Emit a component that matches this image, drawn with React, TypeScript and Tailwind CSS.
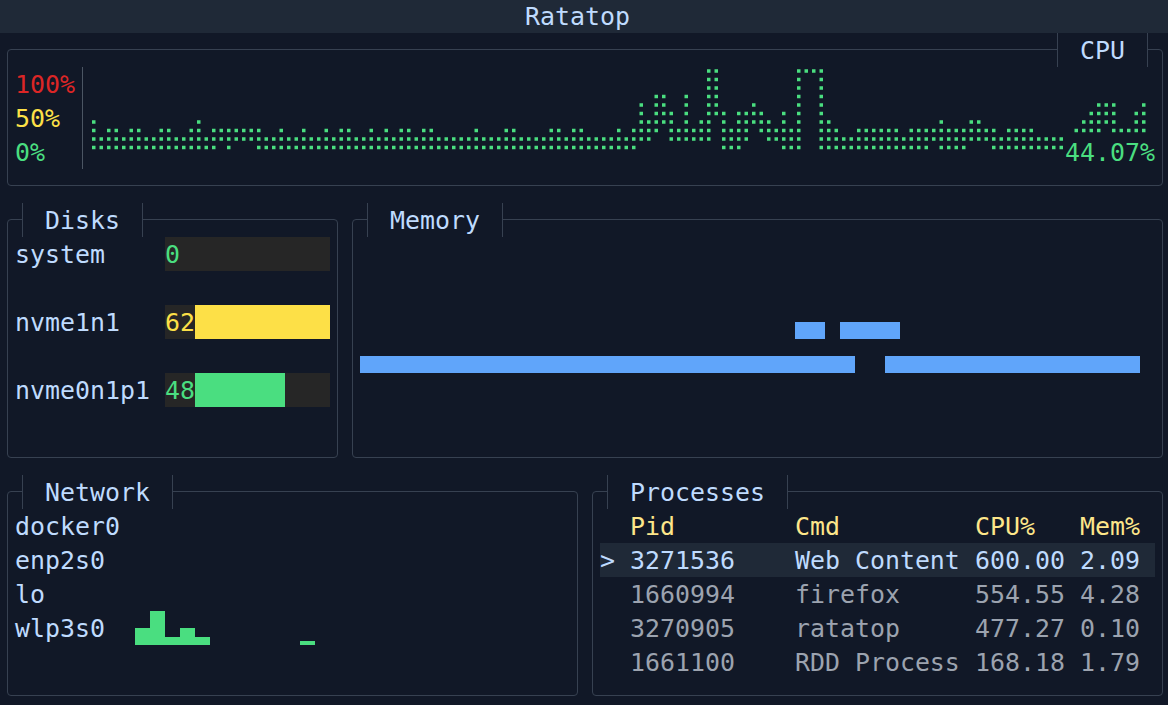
import type { ReactNode } from 'react';
import clsx from 'clsx';

// braille-style dot plot, one string per dot row (top to bottom), ranges of dot columns
const cpuDots: string[] = [
  '82-83,94-97',
  '82-83,94,97',
  '82-83,94,97',
  '75-76,79,82-83,94,97',
  '73,75-76,79,82-83,88,94,97,134-136,140',
  '73,75-77,79,82-84,86-89,92,94,97,133-136,139-140',
  '0,14,73-77,79,81-82,84,86-90,92,94,97-98,113,117-118,132-136,139-140',
  '0,2-3,5-6,9-10,13-14,16-22,25,28,31,33-34,37,39,41-42,44-45,51,55-56,61-62,64-65,70,72-75,77-82,84-87,89-94,97-99,102-107,109-120,122-125,131-134,136-140',
  '0-74,77-82,84-87,90-94,97-129',
  '0-16,18,22-72,84-86,92-94,97-111,113-116,120-129',
];

function parseRow(row: string): number[] {
  const out: number[] = [];
  row.split(',').forEach((part) => {
    const [a, b] = part.split('-').map(Number);
    for (let i = a; i <= (b ?? a); i++) out.push(i);
  });
  return out;
}

const disks = [
  { name: 'system', value: 0, fill: 0, color: 'text-[#4ade80]', bar: 'bg-[#4ade80]' },
  { name: 'nvme1n1', value: 62, fill: 135, color: 'text-[#fde047]', bar: 'bg-[#fde047]' },
  { name: 'nvme0n1p1', value: 48, fill: 90, color: 'text-[#4ade80]', bar: 'bg-[#4ade80]' },
];

const sparkline = [17, 34, 8.5, 17, 8.5, 0, 0, 0, 0, 0, 0, 4.25];

const processes = [
  { pid: '3271536', cmd: 'Web Content', cpu: '600.00', mem: '2.09' },
  { pid: '1660994', cmd: 'firefox', cpu: '554.55', mem: '4.28' },
  { pid: '3270905', cmd: 'ratatop', cpu: '477.27', mem: '0.10' },
  { pid: '1661100', cmd: 'RDD Process', cpu: '168.18', mem: '1.79' },
];

interface PanelProps {
  title: string;
  right?: boolean;
  className?: string;
  children?: ReactNode;
}

function Panel({ title, right, className, children }: PanelProps) {
  return (
    <div className={clsx('flex flex-col shrink-0', className)}>
      <div className="flex-1 min-h-0 flex flex-col mt-[16px] mb-[17px] mx-[7px] px-[7px] border border-[#374151] rounded-[4px]">
        <div className={clsx('-mt-[17px] h-[34px] flex shrink-0', right && 'justify-end')}>
          <div className="mx-[7px] h-[34px] px-[22px] border-x border-[#374151] bg-[#111827] text-[#bfdbfe] whitespace-pre">
            {title}
          </div>
        </div>
        {children}
      </div>
    </div>
  );
}

function CpuChart() {
  return (
    <div className="relative w-[1065px] h-[102px]">
      <svg width="1065" height="102" className="block">
        {cpuDots.map((row, j) =>
          parseRow(row).map((k) => (
            <rect key={`${j}-${k}`} x={2 + 7.5 * k} y={2.25 + 8.5 * j} width={3.5} height={3.5} fill="#4ade80" />
          ))
        )}
      </svg>
      <div className="absolute right-0 bottom-0 h-[34px] text-[#4ade80]">44.07%</div>
    </div>
  );
}

export default function App() {
  return (
    <div className="w-[1168px] h-[705px] overflow-hidden bg-[#111827] text-[#bfdbfe] font-['DejaVu_Sans_Mono',monospace] text-[24.9px] leading-[36px]">
      <div className="h-[33px] bg-[#1f2937]">
        <div className="w-[1155px] flex justify-center leading-[33px]">Ratatop</div>
      </div>

      <div className="w-[1170px] flex flex-col">
        {/* cpu */}
        <Panel title="CPU" right className="h-[170px] w-[1170px]">
          <div className="flex h-[102px]">
            <div className="w-[60px] flex flex-col">
              <div className="h-[34px] text-[#dc2626]">100%</div>
              <div className="h-[34px] text-[#fde047]">50%</div>
              <div className="h-[34px] text-[#4ade80]">0%</div>
            </div>
            <div className="w-[15px] flex justify-center">
              <div className="w-px h-full bg-[#4b5563]" />
            </div>
            <CpuChart />
          </div>
        </Panel>

        <div className="flex h-[272px]">
          <Panel title="Disks" className="w-[345px]">
            <div className="flex flex-col">
              {disks.map((d) => (
                <div key={d.name} className="flex h-[68px]">
                  <div className="w-[150px] h-[34px]">{d.name}</div>
                  <div className="w-[165px] h-[34px] flex bg-[#262626]">
                    <span className={clsx('h-[34px]', d.color)}>{d.value}</span>
                    <div className={clsx('h-[34px]', d.bar)} style={{ width: d.fill }} />
                  </div>
                </div>
              ))}
            </div>
          </Panel>

          <Panel title="Memory" className="w-[825px]">
            <div className="flex flex-col">
              <div className="h-[68px]" />
              <div className="h-[34px] flex items-end">
                <div className="w-[435px]" />
                <div className="w-[30px] h-[17px] bg-[#60a5fa]" />
                <div className="w-[15px]" />
                <div className="w-[60px] h-[17px] bg-[#60a5fa]" />
              </div>
              <div className="h-[34px] flex items-end">
                <div className="w-[495px] h-[17px] bg-[#60a5fa]" />
                <div className="w-[30px]" />
                <div className="w-[255px] h-[17px] bg-[#60a5fa]" />
              </div>
            </div>
          </Panel>
        </div>

        <div className="flex h-[238px]">
          <Panel title="Network" className="w-[585px]">
            <div className="flex flex-col">
              <div className="h-[34px]">docker0</div>
              <div className="h-[34px]">enp2s0</div>
              <div className="h-[34px]">lo</div>
              <div className="h-[34px] flex">
                <div className="w-[120px]">wlp3s0</div>
                <div className="flex items-end h-[34px]">
                  {sparkline.map((h, i) => (
                    <div key={i} className="w-[15px] bg-[#4ade80]" style={{ height: h }} />
                  ))}
                </div>
              </div>
            </div>
          </Panel>

          <Panel title="Processes" className="w-[585px]">
            <div className="flex flex-col whitespace-pre">
              <div className="h-[34px] flex text-[#fde68a]">
                <div className="w-[30px]" />
                <div className="w-[165px]">Pid</div>
                <div className="w-[180px]">Cmd</div>
                <div className="w-[105px]">CPU%</div>
                <div className="w-[75px]">Mem%</div>
              </div>
              {processes.map((p, i) => (
                <div
                  key={p.pid}
                  className={clsx('h-[34px] flex', i === 0 ? 'bg-[#1f2937] text-[#bfdbfe]' : 'text-[#9ca3af]')}
                >
                  <div className="w-[30px]">{i === 0 ? '>' : ''}</div>
                  <div className="w-[165px]">{p.pid}</div>
                  <div className="w-[180px]">{p.cmd}</div>
                  <div className="w-[105px]">{p.cpu}</div>
                  <div className="w-[75px]">{p.mem}</div>
                </div>
              ))}
            </div>
          </Panel>
        </div>
      </div>
    </div>
  );
}
